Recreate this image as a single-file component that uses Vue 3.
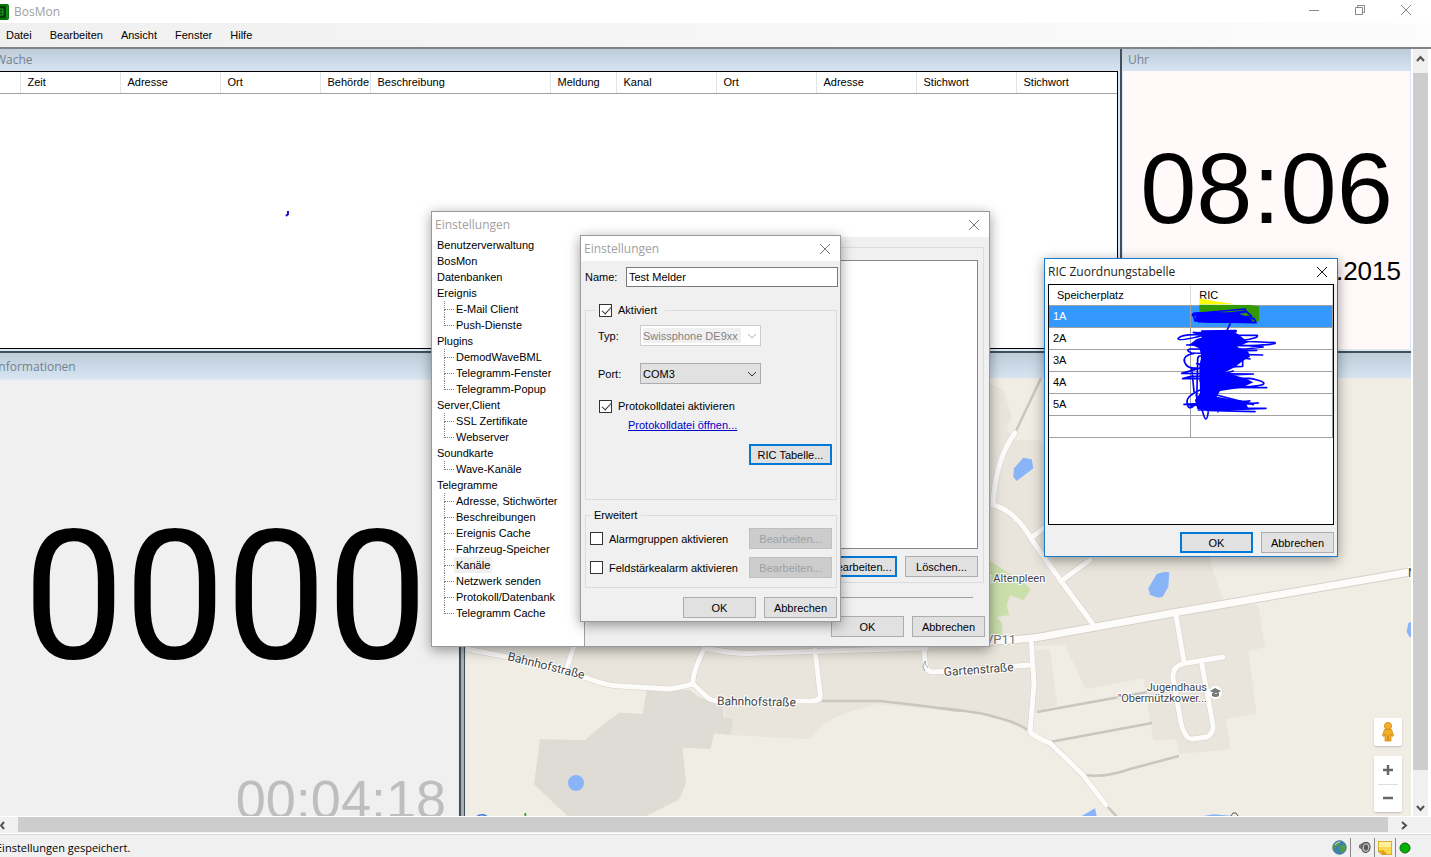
<script setup>
import { ref } from 'vue'

const menu = ['Datei', 'Bearbeiten', 'Ansicht', 'Fenster', 'Hilfe']
const columns = [
  { t: '', w: 20 }, { t: 'Zeit', w: 100 }, { t: 'Adresse', w: 100 }, { t: 'Ort', w: 100 },
  { t: 'Behörde', w: 50 }, { t: 'Beschreibung', w: 180 }, { t: 'Meldung', w: 66 },
  { t: 'Kanal', w: 100 }, { t: 'Ort', w: 100 }, { t: 'Adresse', w: 100 },
  { t: 'Stichwort', w: 100 }, { t: 'Stichwort', w: 101 }
]
const tree = [
  { t: 'Benutzerverwaltung' }, { t: 'BosMon' }, { t: 'Datenbanken' },
  { t: 'Ereignis', c: ['E-Mail Client', 'Push-Dienste'] },
  { t: 'Plugins', c: ['DemodWaveBML', 'Telegramm-Fenster', 'Telegramm-Popup'] },
  { t: 'Server,Client', c: ['SSL Zertifikate', 'Webserver'] },
  { t: 'Soundkarte', c: ['Wave-Kanäle'] },
  { t: 'Telegramme', c: ['Adresse, Stichwörter', 'Beschreibungen', 'Ereignis Cache', 'Fahrzeug-Speicher', 'Kanäle', 'Netzwerk senden', 'Protokoll/Datenbank', 'Telegramm Cache'] }
]
const selected = ref('Kanäle')
const slots = ['1A', '2A', '3A', '4A', '5A', '']
const name = ref('Test Melder')
const active = ref(true)
const logging = ref(true)
const groups = ref(false)
const signal = ref(false)
</script>

<template>
  <div class="app">
    <header class="titlebar">
      <svg class="logo" width="9" height="16" viewBox="0 0 9 16"><rect x="-6" y="0" width="15" height="16" rx="2" fill="#087808" /><rect x="-5" y="2" width="11" height="12" fill="#033f05" /><path d="M0 5h3M0 8h3M0 11h3M3 5v6" stroke="#25a52b" fill="none" /><path d="M7 2v12" stroke="#27a22c" /></svg>
      <span class="app-name">BosMon</span>
      <div class="win-controls">
        <button type="button" aria-label="Minimieren"><svg width="12" height="12"><path d="M1 6.500h10" stroke="#888" /></svg></button>
        <button type="button" aria-label="Wiederherstellen"><svg width="12" height="12" fill="none" stroke="#888"><path d="M1.500 3.500h7v7h-7zM3.500 3.500v-2h7v7h-2" /></svg></button>
        <button type="button" aria-label="Schließen"><svg width="12" height="12"><path d="M1 1l10 10M11 1L1 11" stroke="#888" /></svg></button>
      </div>
    </header>
    <nav class="menubar"><button v-for="m in menu" :key="m" type="button">{{ m }}</button></nav>

    <main class="workspace">
      <div class="mdi">
        <div class="row top">
          <section class="child wache">
            <h2 class="cap cut">Wache</h2>
            <div class="list">
              <table>
                <colgroup><col v-for="(c, i) in columns" :key="i" :style="{ width: c.w + 'px' }" /></colgroup>
                <thead><tr><th v-for="(c, i) in columns" :key="i">{{ c.t }}</th></tr></thead>
              </table>
              <svg class="speck" width="5" height="6"><path d="M3 0v3L1 5" fill="none" stroke="#1a10c8" stroke-width="2" /></svg>
            </div>
          </section>
          <section class="child uhr">
            <h2 class="cap">Uhr</h2>
            <div class="clock-body"><div class="clock">08:06</div><div class="date">.2015</div></div>
          </section>
        </div>
        <div class="row bottom">
          <section class="child info">
            <h2 class="cap cut">Informationen</h2>
            <div class="info-body"><div class="counter">0000</div><div class="timer">00:04:18</div></div>
          </section>
          <div class="gutter"></div>
          <section class="child karte">
            <h2 class="cap"></h2>
            <div class="map">
              <svg class="map-art" viewBox="466 378 945 438" preserveAspectRatio="xMinYMin slice">
                <rect x="466" y="378" width="945" height="438" fill="#f0ede5" />
                <g transform="translate(840 210) scale(.33333)">
                  <path d="M447 520L490 540 515 620 500 660 530 690 600 690 800 900 1000 1020 1100 1030 1100 1300 447 1310z" fill="#e9e5dc" />
                  <path d="M447 1045L560 1130 572 1150 550 1172 510 1155 500 1185 508 1215 470 1220 485 1240 487 1277 447 1287z" fill="#cadfaa" />
                  <path d="M550 743L575 748 580 775 530 813 520 800 522 775z" fill="#8ab4f8" />
                </g>
                <g transform="translate(940 550) scale(.33333)">
                  <path d="M0 100L0 0 800 0 852 160 955 165 975 290 925 305 950 490 858 508 872 598 718 612 708 567 640 572 610 385 437 418 365 265 275 265 0 270z" fill="#e9e5dc" />
                  <path d="M0 265L270 265 283 300 330 298 352 465 285 485 265 545 150 495 0 475z" fill="#e9e5dc" />
                  <path d="M147 30L260 105 272 120 250 150 210 135 200 165 208 195 170 200 185 220 187 257 147 267z" fill="#cadfaa" />
                  <path d="M852 156L800 0 1420 0 1420 68 960 148z" fill="#f0ede5" />
                  <path d="M650 72Q670 64 688 67L685 110 668 140 655 143 630 135 625 115z" fill="#8ab4f8" />
                  <path d="M1417 213L1405 220 1400 245 1408 260 1417 262zM425 798L465 775 470 798zM790 798L820 793 882 798z" fill="#8ab4f8" />
                </g>
                <g transform="translate(460 600) scale(.33333)">
                  <path d="M0 100H1500V335L1250 312 1190 330Q1110 350 1080 385L1050 418 812 405 790 320 700 260 640 268 560 262 470 255 380 232 130 170 0 145z" fill="#e9e5dc" />
                  <path d="M560 270L690 270 715 290 790 320 790 350 820 357 812 405 762 400 752 447 668 443 678 548 658 598 555 650 325 650 222 553 240 418 375 420 440 365 480 338 548 342z" fill="#dedcd5" />
                  <circle cx="348" cy="549" r="24" fill="#8ab4f8" />
                </g>
                <g fill="none" stroke="#c9c6bf" stroke-width="2.500">
                  <path d="M822 701H880Q920 705 960 711M940 708Q980 712 995 717 1020 723 1030 732M1037 712L1147 692M1050 742L1152 723M1085 775Q1105 778 1130 769L1179 756M1106 805L1118 818M1042 376L1015 433" />
                </g>
                <g v-for="pass in 2" :key="pass" fill="none" stroke-linejoin="round" stroke-linecap="round" :stroke="pass === 1 ? '#d5d1c8' : '#fdfcfa'">
                  <path :stroke-width="pass === 1 ? 6 : 5" d="M466 649L503 656 587 678Q607 686 620 686L670 689Q682 687 693 684L707 697Q711 701 720 701H813Q822 700 820 693L815 650M693 684Q692 673 705 647M705 648Q737 655 760 653L927 648M567 667L574 646M924 648L925 662Q926 672 933 672L1030 665M1031 638L1034 684 1030 732Q1037 738 1050 743L1083 775 1106 805M1015 433Q995 460 993 505 1015 510 1032 540L1061 581 1092 623M1061 581L1090 560M1031 538L1044 528M1176 615L1184 662M1223 657L1187 663Q1172 665 1173 678L1181 723Q1185 739 1192 739L1207 737Q1214 733 1213 725L1202 665" />
                  <path :stroke-width="pass === 1 ? 9 : 7" stroke-linecap="butt" d="M985 641Q1020 640 1040 637L1173 613 1410 572" />
                </g>
                <g class="map-label">
                  <text transform="translate(507 660) rotate(14)" font-size="12">Bahnhofstraße</text>
                  <text transform="translate(717 705) rotate(1)" font-size="12">Bahnhofstraße</text>
                  <text transform="translate(944 676) rotate(-4)" font-size="12">Gartenstraße</text>
                  <text x="987" y="582" font-size="11">t Altenpleen</text>
                  <text x="985" y="644" font-size="13" fill="#777">VP11</text>
                  <text x="1207" y="691" text-anchor="end" font-size="11">Jugendhaus</text>
                  <text x="1207" y="702" text-anchor="end" font-size="11">"Obermützkower...</text>
                  <text x="1408" y="577" font-size="12">N</text>
                </g>
                <circle cx="1215.500" cy="692.500" r="6.500" fill="#fff" /><path d="M1210 691l5-3 6 3-5 3zM1212 693v3q4 2 7 0v-3" fill="#777" />
                <path d="M925 671l-2-4 2-6 1 4 2 3" fill="none" stroke="#aab" />
                <text class="google" x="474" y="828" font-size="20"><tspan fill="#4a7de0">G</tspan><tspan fill="#d85040">o</tspan><tspan fill="#e8b830">o</tspan><tspan fill="#4a7de0">g</tspan><tspan fill="#3d9a55">l</tspan><tspan fill="#d85040">e</tspan></text>
                <path d="M1231 816l2-3 3 0 2 3" fill="none" stroke="#555" />
              </svg>
              <div class="map-tools">
                <button type="button" class="peg" aria-label="Street View"><svg width="14" height="20" viewBox="0 0 14 20"><circle cx="7" cy="4" r="3.500" fill="#f5b02e" stroke="#d48d13" /><path d="M3.500 7.500h7l2 6-1.500 1-1-2.500V19H4v-7l-1 2.500-1.500-1z" fill="#f5ae29" stroke="#d48d13" stroke-width=".8" /><path d="M7 13v6" stroke="#b87810" /></svg></button>
                <div class="zoom">
                  <button type="button" aria-label="Vergrößern"><svg width="12" height="12"><path d="M1 6h10M6 1v10" stroke="#666" stroke-width="2.500" /></svg></button>
                  <button type="button" aria-label="Verkleinern"><svg width="12" height="12"><path d="M1 6h10" stroke="#666" stroke-width="2.500" /></svg></button>
                </div>
              </div>
            </div>
          </section>
        </div>
      </div>
      <div class="vscroll">
        <button type="button" aria-label="Nach oben"><svg width="9" height="7"><path d="M1 6l3.500-4L8 6" fill="none" stroke="#505050" stroke-width="2" /></svg></button>
        <div class="thumb"></div>
        <button type="button" class="down" aria-label="Nach unten"><svg width="9" height="7"><path d="M1 1l3.500 4L8 1" fill="none" stroke="#505050" stroke-width="2" /></svg></button>
      </div>
    </main>
    <div class="hscroll">
      <button type="button" class="left" aria-label="Nach links"><svg width="7" height="9"><path d="M4 1L1 4.500 4 8" fill="none" stroke="#505050" stroke-width="2" /></svg></button>
      <div class="thumb"></div>
      <button type="button" aria-label="Nach rechts"><svg width="7" height="9"><path d="M1 1l4 3.500L1 8" fill="none" stroke="#505050" stroke-width="2" /></svg></button>
    </div>
    <footer class="status">
      <span class="status-text">Einstellungen gespeichert.</span>
      <div class="tray">
        <svg width="15" height="15" viewBox="0 0 15 15"><circle cx="7.500" cy="7.500" r="6.800" fill="#3d7eb5" stroke="#5b7f93" /><path d="M3 3q3-2 5-1l-1 3-3 2-1 2-2-1zM8 6l4-2 2 4-2 4-3 1-1-3zM4 10l2 1v3z" fill="#4f9c4b" /><path d="M3 5q2-3 5-3" stroke="#c4e2f3" fill="none" /></svg>
        <i></i>
        <svg width="13" height="13" viewBox="0 0 13 13"><path d="M1 4l5-3 4 0 2 4-1 5-3 2-5-4-2-1z" fill="#777" /><ellipse cx="8" cy="6.500" rx="4" ry="5" fill="#bbb" stroke="#444" transform="rotate(15 8 6.500)" /><ellipse cx="8" cy="6.500" rx="2" ry="3" fill="#555" /></svg>
        <i></i>
        <svg width="14" height="14" viewBox="0 0 14 14"><path d="M0 0h14v14H5L0 10z" fill="#fbd84c" stroke="#b98a16" /><path d="M1 1h12v5H1z" fill="#fff0a0" /><path d="M0 10l5-1v5z" fill="#e3a81d" /><path d="M5 9v5l4-1z" fill="#d99b18" /></svg>
        <i></i>
        <svg width="12" height="12"><circle cx="6" cy="6" r="5" fill="#00b400" stroke="#145c14" /></svg>
      </div>
    </footer>

    <section class="dialog settings" role="dialog" aria-label="Einstellungen">
      <header class="dlg-title"><span>Einstellungen</span><button type="button" aria-label="Schließen"><svg width="12" height="12"><path d="M1 1l10 10M11 1L1 11" stroke="#777" /></svg></button></header>
      <div class="settings-body">
        <ul class="tree">
          <li v-for="n in tree" :key="n.t"><span>{{ n.t }}</span>
            <ul v-if="n.c"><li v-for="c in n.c" :key="c"><span :class="{ sel: c === selected }" @click="selected = c">{{ c }}</span></li></ul>
          </li>
        </ul>
        <div class="pane">
          <div class="box">
            <div class="listbox"></div>
            <div class="buttons"><button type="button" class="btn focus">Bearbeiten...</button><button type="button" class="btn">Löschen...</button></div>
          </div>
          <hr />
          <div class="buttons end"><button type="button" class="btn">OK</button><button type="button" class="btn">Abbrechen</button></div>
        </div>
      </div>
    </section>

    <section class="dialog channel" role="dialog" aria-label="Einstellungen Kanal">
      <header class="dlg-title"><span>Einstellungen</span><button type="button" aria-label="Schließen"><svg width="12" height="12"><path d="M1 1l10 10M11 1L1 11" stroke="#777" /></svg></button></header>
      <form class="form" @submit.prevent>
        <div class="name-row"><label for="name">Name:</label><input id="name" v-model="name" type="text" /></div>
        <fieldset class="main-set">
          <legend><label><input v-model="active" type="checkbox" />Aktiviert</label></legend>
          <div class="field typ"><label for="typ">Typ:</label><div class="combo off"><select id="typ" disabled><option>Swissphone DE9xx</option></select><svg width="10" height="6"><path d="M1 1l4 4 4-4" fill="none" stroke="#aaa" /></svg></div></div>
          <div class="field"><label for="port">Port:</label><div class="combo"><select id="port"><option>COM3</option></select><svg width="10" height="6"><path d="M1 1l4 4 4-4" fill="none" stroke="#333" /></svg></div></div>
          <label class="check"><input v-model="logging" type="checkbox" />Protokolldatei aktivieren</label>
          <a href="#">Protokolldatei öffnen...</a>
          <button type="button" class="btn wide focus">RIC Tabelle...</button>
        </fieldset>
        <fieldset class="more-set">
          <legend>Erweitert</legend>
          <div class="opt"><label><input v-model="groups" type="checkbox" />Alarmgruppen aktivieren</label><button type="button" class="btn wide" disabled>Bearbeiten...</button></div>
          <div class="opt"><label><input v-model="signal" type="checkbox" />Feldstärkealarm aktivieren</label><button type="button" class="btn wide" disabled>Bearbeiten...</button></div>
        </fieldset>
        <div class="buttons end"><button type="button" class="btn">OK</button><button type="button" class="btn">Abbrechen</button></div>
      </form>
    </section>

    <section class="dialog ric" role="dialog" aria-label="RIC Zuordnungstabelle">
      <header class="dlg-title"><span>RIC Zuordnungstabelle</span><button type="button" aria-label="Schließen"><svg width="12" height="12"><path d="M1 1l10 10M11 1L1 11" stroke="#111" /></svg></button></header>
      <div class="grid-box">
        <table>
          <thead><tr><th>Speicherplatz</th><th>RIC</th></tr></thead>
          <tbody><tr v-for="s in slots" :key="s" :class="{ on: s === '1A' }"><td>{{ s }}</td><td></td></tr></tbody>
        </table>
        <svg class="ink" width="115" height="140" viewBox="0 0 345 420">
          <path d="M88 40L125 47 195 58H88z" fill="#ff0" />
          <path d="M88 59L240 60 267 64V108L250 112H88z" fill="#390" />
          <g fill="#00f"><path d="M80 84L130 80 200 84 232 96 250 110 200 114 110 113 74 106z" /><path d="M95 138L190 138 210 152 235 172 200 185 235 200 240 215 218 228 195 246 165 262 230 282 250 292 215 308 150 318 140 335 225 350 235 370 130 378 82 372 75 345 90 325 88 240 95 215 88 190 60 178 80 162 95 158z" /></g>
          <g fill="none" stroke="#00f" stroke-width="5" stroke-linecap="round" stroke-linejoin="round">
            <path d="M68 92Q65 82 90 84L225 72 228 78 100 94 70 88 75 108 230 80 245 94 90 102 252 100 258 113 85 110M181 115L170 138" />
            <path d="M95 138L198 137Q205 142 150 144L70 143 130 152Q35 143 24 161 27 170 105 150L262 151Q266 160 218 166L90 163 315 173Q323 180 215 182L50 180 160 176 280 186 228 192 60 192Q45 196 65 204L278 210 140 207 240 222" />
            <path d="M72 205Q36 212 44 232 52 252 80 249M100 200L260 196M218 226V244L140 247 80 236M105 215Q80 205 83 230L80 350M122 210V365M136 225L132 340M95 215L94 350" />
            <path d="M95 248L35 265 250 267 60 275 38 281 240 280Q290 290 280 298 262 308 130 307L290 308M190 258L90 287 210 302M65 248L72 320" />
            <path d="M90 315Q45 335 52 355 54 378 75 360L42 358 240 348 60 361 265 354 85 369 288 370 110 376 255 380M140 330L250 359M78 330L98 380Q110 425 115 378M144 365V381M85 375H110" />
          </g>
        </svg>
      </div>
      <div class="buttons end"><button type="button" class="btn focus">OK</button><button type="button" class="btn">Abbrechen</button></div>
    </section>
  </div>
</template>

<style>
html, body, #app { height: 100%; }
body { overflow: hidden; }
</style>

<style scoped>
* { box-sizing: border-box; }
button, input, select { font: inherit; color: inherit; margin: 0; }
button { padding: 0; border: 0; background: none; white-space: nowrap; }
svg { display: block; flex: none; }
.app { position: relative; height: 100%; display: flex; flex-direction: column; overflow: hidden; background: #f0f0f0; font: 11px/16px "Liberation Sans", Arial, sans-serif; color: #000; }
.titlebar { height: 23px; flex: none; display: flex; align-items: center; background: #fff; }
.app-name { margin-left: 5px; font: 12px/16px "Open Sans", sans-serif; color: #a0a0a0; flex: 1; }
.win-controls { display: flex; gap: 34px; margin-right: 19px; padding-bottom: 3px; }
.menubar { height: 24px; flex: none; display: flex; align-items: center; gap: 18px; padding-left: 6px; background: linear-gradient(90deg, #f0f0f0, #fcfcfc); }
.workspace { flex: 1; min-height: 0; display: flex; border-top: 2px solid #7d8388; }
.mdi { flex: 1; min-width: 0; display: flex; flex-direction: column; background: #abadb0; border-right: 2px solid #fff; }
.row { display: flex; min-height: 0; }
.top { height: 302px; }
.bottom { flex: 1; border-top: 2px solid #435059; }
.child { display: flex; flex-direction: column; min-width: 0; background: #dce8f3; }
.cap { height: 22px; flex: none; margin: 0; padding: 3px 6px; font: 12px/16px "Open Sans", sans-serif; color: #74828f; background: linear-gradient(#bfcddb, #d6e4f1); white-space: nowrap; overflow: hidden; }
.cut { padding-left: 0; text-indent: -5px; }
.wache { flex: 1; border-right: 2px solid #435059; }
.list { position: relative; flex: 1; margin: 0 2px 2px 0; background: #fff; border: 1px solid #000; border-width: 1px 1px 1px 0; }
.list table { border-collapse: collapse; table-layout: fixed; width: 1117px; }
.list th { height: 21px; padding: 0 0 0 7px; text-align: left; font-weight: 400; line-height: 16px; border-right: 1px solid #e0e5e8; border-bottom: 1px solid #a0a0a0; white-space: nowrap; }
.list th:last-child { border-right: 0; }
.speck { position: absolute; left: 285px; top: 139px; }
.uhr { width: 289px; flex: none; }
.clock-body { flex: 1; margin: 0 1px 2px; background: #fff9f9; }
.clock { margin-top: 67px; font-size: 101px; line-height: 100px; text-align: center; }
.date { margin: 18px 9px 0 0; font-size: 26px; line-height: 30px; text-align: right; }
.info { width: 461px; flex: none; border-right: 2px solid #435059; }
.info .cap, .karte .cap { height: 25px; padding-top: 6px; }
.info-body { flex: 1; min-height: 0; display: flex; flex-direction: column; justify-content: space-between; margin: 2px 1px 0 0; background: #f0f0f0; overflow: hidden; }
.counter { margin: 126px 0 0 -7px; font: 180px/182px Roboto, sans-serif; text-align: center; }
.timer { margin: 0 12px -10px 0; font-size: 54px; line-height: 54px; text-align: right; color: #bebebe; }
.gutter { width: 3px; }
.karte { flex: 1; border-left: 1px solid #435059; }
.map { position: relative; flex: 1; min-height: 0; margin-left: 1px; overflow: hidden; background: #f0ede5; }
.map-art { width: 100%; height: 100%; }
.map-label { font-family: Roboto, sans-serif; fill: #444; stroke: #fff; stroke-width: 2px; paint-order: stroke; }
.google { font-family: "Liberation Sans", sans-serif; }
.map-tools { position: absolute; right: 9px; bottom: 4px; display: flex; flex-direction: column; gap: 10px; }
.map-tools button { width: 28px; height: 28px; display: grid; place-items: center; background: #fff; border-radius: 2px; }
.peg, .zoom { box-shadow: 0 1px 2px #0003; }
.zoom { background: #fff; border-radius: 2px; }
.zoom button + button { position: relative; }
.zoom button + button::before { content: ""; position: absolute; top: 0; left: 4px; right: 4px; border-top: 1px solid #ddd; }
.vscroll { width: 18px; flex: none; display: flex; flex-direction: column; border-right: 3px solid #fff; }
.vscroll button { height: 24px; display: grid; place-items: center; padding-bottom: 6px; }
.vscroll .thumb { flex: 1; background: #cdcdcd; }
.vscroll .down { height: 46px; padding: 30px 0 0; }
.hscroll { height: 18px; flex: none; display: flex; border-top: 1px solid #fff; }
.hscroll .thumb { flex: 1; margin-bottom: 2px; background: #cdcdcd; }
.hscroll button { width: 43px; display: grid; place-items: center; padding-right: 10px; }
.hscroll .left { width: 18px; padding-right: 0; justify-items: start; }
.status { height: 23px; flex: none; display: flex; align-items: center; justify-content: space-between; padding-top: 3px; border-top: 1px solid #d8d8d8; box-shadow: 0 -1px #fff; }
.status-text { margin-left: -4px; font: 11px/16px "Open Sans", sans-serif; }
.tray { display: flex; align-items: center; gap: 3px; margin-right: 20px; }
.tray i { width: 1px; height: 19px; background: #888; }
.tray i:first-of-type { margin-right: 4px; }

.dialog { position: absolute; display: flex; flex-direction: column; background: #f0f0f0; border: 1px solid #999; box-shadow: 0 3px 12px #0006; }
.dlg-title { height: 25px; flex: none; display: flex; align-items: center; justify-content: space-between; padding: 0 9px 0 3px; background: #fff; font: 12px/16px "Open Sans", sans-serif; color: #a0a0a0; }
.btn { min-width: 73px; height: 21px; background: #e1e1e1; border: 1px solid #adadad; }
.btn.focus { border: 2px solid #0078d7; }
.btn.wide { width: 83px; }
.btn:disabled { background: #ccc; border-color: #bfbfbf; color: #a0a0a0; }
.buttons { display: flex; gap: 8px; justify-content: flex-end; }

.settings { left: 431px; top: 211px; width: 559px; height: 436px; }
.settings-body { flex: 1; display: flex; min-height: 0; }
.tree { width: 153px; background: #fff; border-right: 1px solid #a0a0a0; }
.tree, .tree ul { margin: 0; list-style: none; padding: 0; }
.tree > li { padding-left: 5px; white-space: nowrap; }
.tree li span { display: block; height: 16px; width: max-content; }
.tree ul { padding-left: 7px; }
.tree ul li { display: flex; position: relative; }
.tree ul li::before { content: ""; width: 9px; height: 8px; border-left: 1px dotted #808080; border-bottom: 1px dotted #808080; }
.tree ul li:not(:last-child)::after { content: ""; position: absolute; left: 0; top: 8px; height: 8px; border-left: 1px dotted #808080; }
.tree ul span { padding: 0 2px; }
.sel { background: #f0f0f0; }
.pane { flex: 1; display: flex; flex-direction: column; padding: 10px 4px 9px 4px; }
.box { height: 336px; border: 1px solid #dcdcdc; margin-right: 1px; padding: 12px 5px 5px; display: flex; flex-direction: column; gap: 7px; }
.listbox { flex: 1; background: #fff; border: 1px solid #828790; }
.pane hr { width: calc(100% - 12px); margin: 14px 0 0; border: 0; border-top: 1px solid #a0a0a0; }
.pane .end { margin-top: auto; }

.channel { left: 580px; top: 235px; width: 261px; height: 387px; }
.form { flex: 1; display: flex; flex-direction: column; padding: 6px 3px 3px 4px; }
.name-row { display: flex; align-items: center; }
.name-row label { width: 41px; }
.name-row input { flex: 1; min-width: 0; height: 20px; padding: 0 2px; border: 1px solid #7a7a7a; background: #fff; margin-right: -1px; }
fieldset { margin: 0; padding: 0; border: 1px solid #dcdcdc; min-width: 0; }
.main-set { height: 198px; margin-top: 15px; display: flex; flex-direction: column; }
.main-set legend { margin-left: 9px; padding: 0 8px 0 4px; }
legend label, .check, .opt label { display: flex; align-items: center; gap: 6px; }
input[type="checkbox"] { appearance: none; position: relative; width: 13px; height: 13px; flex: none; border: 1px solid #333; background: #fff; }
input[type="checkbox"]:checked::after { content: ""; position: absolute; left: 4px; top: 0; width: 4px; height: 8px; border: solid #333; border-width: 0 1px 1px 0; transform: rotate(42deg); }
.field { display: flex; align-items: center; margin: 17px 0 0 12px; }
.field.typ { margin-top: 7px; }
.field label { width: 42px; }
.combo { position: relative; width: 121px; }
.combo select { appearance: none; display: block; width: 100%; height: 21px; padding: 0 2px; border: 1px solid #adadad; border-radius: 0; background: #e1e1e1; opacity: 1; }
.combo.off select { background: linear-gradient(#f0f0f0, #f0f0f0) 2px 2px / 98px 15px no-repeat #fff; border-color: #ccc; color: #838383; }
.combo svg { position: absolute; right: 4px; top: 8px; pointer-events: none; }
.check { margin: 14px 0 0 13px; }
.main-set a { align-self: flex-start; margin: 3px 0 0 42px; color: #00c; }
.main-set .btn { align-self: flex-end; margin: 11px 4px 0 0; }
.more-set { height: 81px; margin-top: 7px; }
.more-set legend { margin-left: 4px; padding: 0 4px; }
.opt { display: flex; align-items: center; justify-content: space-between; margin: 5px 4px 0 4px; }
.opt + .opt { margin-top: 8px; }
.form > .end { margin-top: auto; }

.ric { left: 1044px; top: 258px; width: 294px; height: 299px; border-color: #1979ca; }
.ric .dlg-title { color: #222; }
.grid-box { position: relative; height: 241px; margin: 0 3px; background: #fff; border: 1px solid #000; }
.grid-box table { width: 100%; border-collapse: collapse; table-layout: fixed; }
.grid-box th { height: 20px; padding: 0 8px; text-align: left; font-weight: 400; border-bottom: 1px solid #a0a0a0; border-right: 1px solid #ddd; }
.grid-box td { height: 22px; padding: 0 4px; border: 1px solid #a0a0a0; border-left: 0; }
.on td { background: #39f; color: #fff; }
.ink { position: absolute; left: 121px; top: 0; }
.ric .end { margin: 7px 3px 0 0; }
</style>
